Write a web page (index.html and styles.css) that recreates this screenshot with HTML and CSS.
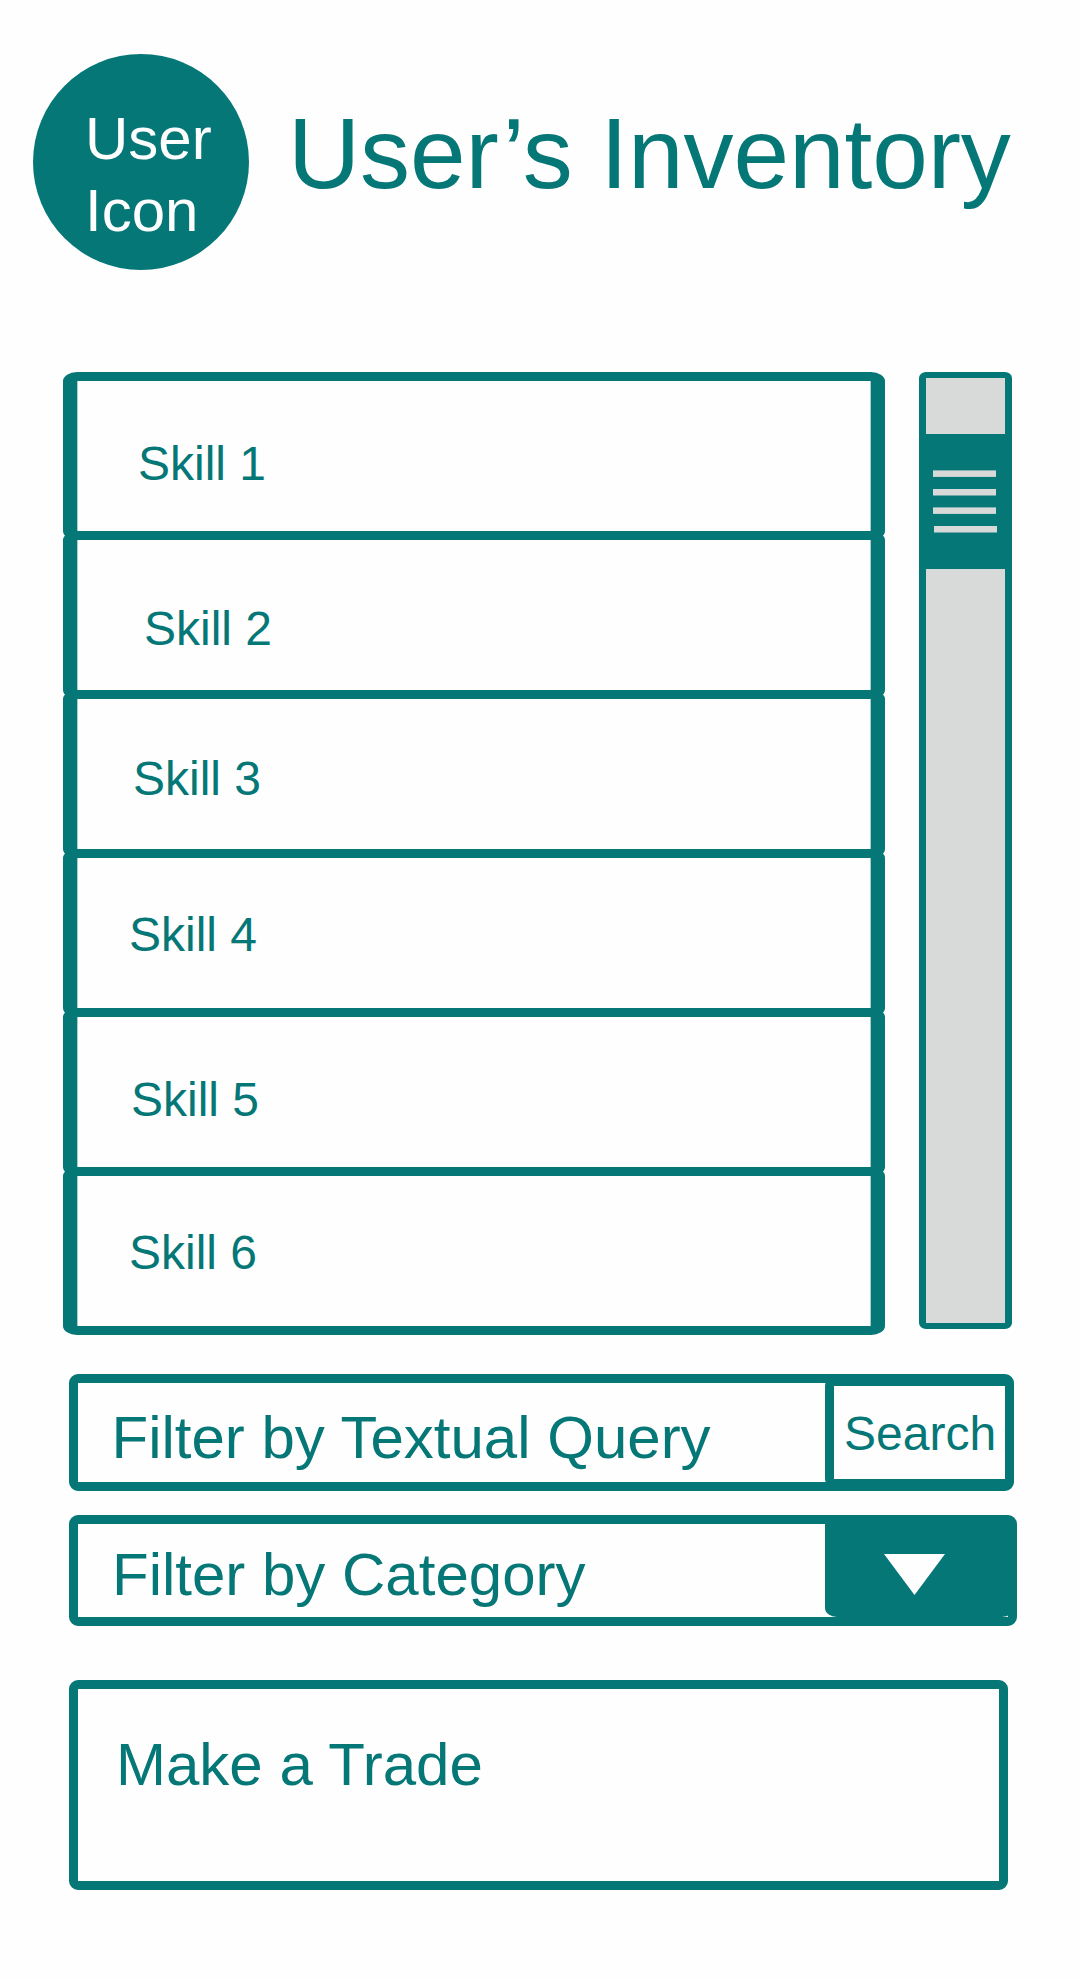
FILE: index.html
```html
<!DOCTYPE html>
<html lang="en">
<head>
<meta charset="utf-8">
<title>User’s Inventory</title>
<link rel="stylesheet" href="styles.css">
</head>
<body>
<header class="header">
  <div class="avatar">User<br>Icon</div>
  <h1 class="title">User’s Inventory</h1>
</header>
<main>
  <section class="inventory">
    <ul class="skills">
      <li class="skill skill-1">Skill 1</li>
      <li class="skill skill-2">Skill 2</li>
      <li class="skill skill-3">Skill 3</li>
      <li class="skill skill-4">Skill 4</li>
      <li class="skill skill-5">Skill 5</li>
      <li class="skill skill-6">Skill 6</li>
    </ul>
    <div class="scrollbar">
      <div class="thumb">
        <svg class="grip" width="79" height="135" viewBox="0 0 79 135">
          <rect x="7" y="36.4" width="63" height="6.5"/>
          <rect x="7" y="55" width="63" height="6.5"/>
          <rect x="7" y="73.4" width="63" height="6.5"/>
          <rect x="8" y="92" width="63" height="6.5"/>
        </svg>
      </div>
    </div>
  </section>
  <section class="query">
    <span class="label">Filter by Textual Query</span>
    <button class="search">Search</button>
  </section>
  <section class="category">
    <span class="label">Filter by Category</span>
    <button class="dropdown" aria-label="Choose category">
      <svg width="61" height="41" viewBox="0 0 61 41"><path d="M0 0H61L30.5 41Z"/></svg>
    </button>
  </section>
  <section class="trade">Make a Trade</section>
</main>
</body>
</html>
```
FILE: styles.css
```css
:root {
  --teal: #057776;
  --paper: #fefefe;
  --track: #d8dad9;
}

* { box-sizing: border-box; }

body {
  margin: 0;
  width: 1080px;
  height: 1980px;
  background: var(--paper);
  color: var(--teal);
  font-family: "Liberation Sans", Arial, sans-serif;
}

.header {
  display: flex;
  height: 372px;
  padding: 54px 0 0 33px;
}

.avatar {
  width: 216px;
  height: 216px;
  padding: 49px 0 0 52px;
  border-radius: 50%;
  background: var(--teal);
  color: var(--paper);
  font-size: 60px;
  line-height: 72px;
}

.title {
  margin: 49px 0 0 39px;
  font-size: 100px;
  font-weight: 400;
  line-height: 100px;
  letter-spacing: -0.1px;
  white-space: nowrap;
}

.inventory {
  display: flex;
  align-items: flex-start;
  gap: 34px;
  padding-left: 63px;
}

.skills {
  width: 822px;
  margin: 0;
  padding: 0;
  list-style: none;
}

/* Neighbouring rows share one 9px rule */
.skill {
  height: 168px;
  border: solid var(--teal);
  border-width: 9px 14px;
  border-radius: 14px / 9px;
  box-shadow: inset 1px 0 #a6cccb, inset -1px 0 #a6cccb;
  font-size: 48px;
  line-height: 48px;
}

.skill + .skill { margin-top: -9px; }

.skill-1 { padding: 59px 0 0 61px; }
.skill-2 { padding: 65px 0 0 67px; }
.skill-3 { padding: 56px 0 0 56px; }
.skill-4 { padding: 53px 0 0 52px; }
.skill-5 { padding: 59px 0 0 54px; }
.skill-6 { padding: 53px 0 0 52px; }

.scrollbar {
  width: 93px;
  height: 957px;
  padding-top: 56px;
  border: solid var(--teal);
  border-width: 6px 7px;
  border-radius: 7px / 6px;
  background: var(--track);
}

.thumb {
  height: 135px;
  background: var(--teal);
}

.grip {
  display: block;
  fill: var(--track);
}

.query,
.category,
.trade {
  margin-left: 69px;
  border: 9px solid var(--teal);
  border-radius: 9px;
  font-size: 60px;
  line-height: 60px;
}

.query,
.category {
  display: flex;
  justify-content: space-between;
}

.query {
  width: 945px;
  height: 117px;
  margin-top: 39px;
}

.query .label { padding: 25px 0 0 33.5px; }

.search {
  width: 189px;
  height: 111px;
  margin: -6px -9px;
  padding: 3px 0 0 10px;
  border: 9px solid var(--teal);
  border-radius: 9px;
  background: none;
  color: inherit;
  font: 48px/48px "Liberation Sans", Arial, sans-serif;
  text-align: left;
}

.category {
  width: 948px;
  height: 111px;
  margin-top: 24px;
}

.category .label { padding: 21px 0 0 34px; }

.dropdown {
  display: flex;
  width: 189px;
  height: 93px;
  margin-right: -6px;
  padding: 30px 0 0 59px;
  border: 0;
  border-radius: 0 0 12px 12px / 0 0 9px 9px;
  background: var(--teal);
}

.dropdown svg { fill: var(--paper); }

.trade {
  width: 939px;
  height: 210px;
  margin-top: 54px;
  padding: 46px 0 0 38px;
}
```
